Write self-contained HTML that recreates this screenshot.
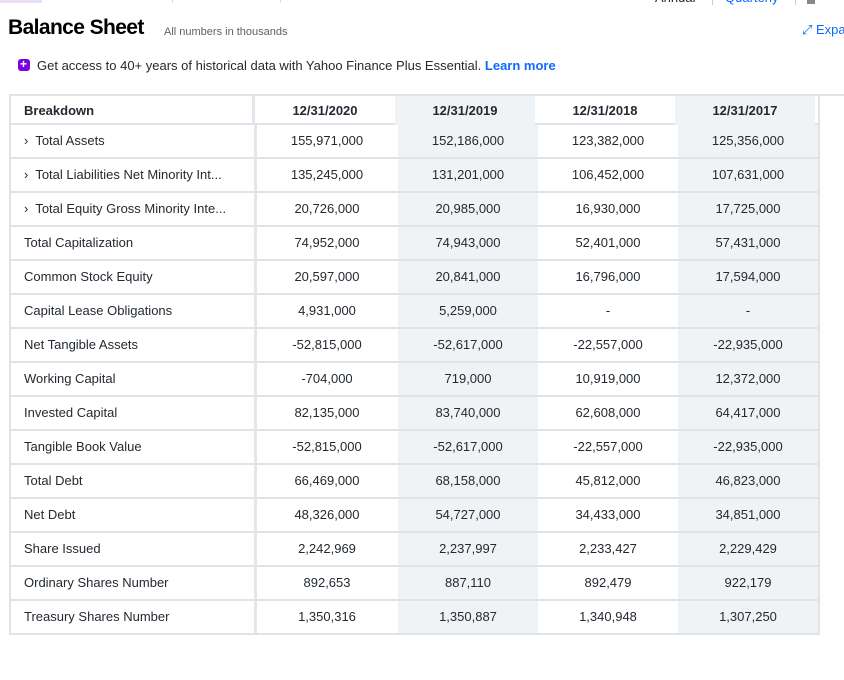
<!DOCTYPE html>
<html><head><meta charset="utf-8"><style>
*{margin:0;padding:0;box-sizing:border-box}
body{width:844px;height:680px;background:#fff;font-family:"Liberation Sans",sans-serif;color:#232a31;position:relative;overflow:hidden}
.a{position:absolute;white-space:nowrap}
.row{position:absolute;left:9px;width:811px;height:34px;border-bottom:2px solid #e0e4e9}
.c{position:absolute;top:0;height:32px;line-height:32px;font-size:13px;text-align:center;white-space:nowrap}
.l{left:0;width:248px;text-align:left;padding-left:15px;border-right:3px solid #e3e6ea}
.c1{left:248px;width:140px}
.c2{left:389px;width:140px;background:#f0f3f5}
.c3{left:529px;width:140px}
.c4{left:669px;width:140px;background:#f0f3f5}
.h .c{font-weight:bold;height:29px;line-height:29px}
</style></head><body>
<div class="a" style="left:0;top:0;width:42px;height:3px;background:#eadcf5"></div>
<div class="a" style="left:172px;top:0;width:1px;height:3px;background:#ddd"></div>
<div class="a" style="left:280px;top:0;width:1px;height:3px;background:#ddd"></div>
<div class="a" style="left:655px;top:-10px;font-size:13px;color:#232a31">Annual</div>
<div class="a" style="left:712px;top:0;width:1px;height:5px;background:#ccc"></div>
<div class="a" style="left:725px;top:-10px;font-size:13px;color:#0f69ff">Quarterly</div>
<div class="a" style="left:795px;top:0;width:1px;height:5px;background:#ccc"></div>
<div class="a" style="left:807px;top:0;width:8px;height:4px;background:#888"></div>
<div class="a" style="left:8px;top:16px;font-size:21px;font-weight:bold;letter-spacing:-0.6px;color:#000">Balance Sheet</div>
<div class="a" style="left:164px;top:26px;font-size:11px;color:#5b636a">All numbers in thousands</div>
<div class="a" style="left:802px;top:22px;font-size:13px;color:#0f69ff">⤢ Expa</div>
<div class="a" style="left:18px;top:59px;width:12px;height:12px;border-radius:3px;background:#7d00e0"></div>
<div class="a" style="left:20px;top:57px;color:#fff;font-size:12px;font-weight:bold">+</div>
<div class="a" style="left:37px;top:58px;font-size:13px">Get access to 40+ years of historical data with Yahoo Finance Plus Essential. <span style="color:#0f69ff;font-weight:bold">Learn more</span></div>
<div class="a" style="left:9px;top:94px;width:835px;height:2px;background:#e0e4e9"></div>
<div class="a" style="left:9px;top:94px;width:2px;height:541px;background:#e0e4e9"></div>
<div class="a" style="left:818px;top:94px;width:2px;height:541px;background:#e0e4e9"></div>
<div class="a" style="left:807px;top:162px;font-size:13px;font-weight:bold">Y</div>
<div class="row h" style="top:96px;height:29px;">
<div class="c l" style="left:2px;width:244px;padding-left:13px">Breakdown</div>
<div class="c c1" style="left:246px">12/31/2020</div><div class="c c2" style="left:386px">12/31/2019</div><div class="c c3" style="left:526px">12/31/2018</div><div class="c c4" style="left:666px">12/31/2017</div></div>
<div class="row" style="top:125px"><div class="c l">›&nbsp; Total Assets</div><div class="c c1">155,971,000</div><div class="c c2">152,186,000</div><div class="c c3">123,382,000</div><div class="c c4">125,356,000</div></div>
<div class="row" style="top:159px"><div class="c l">›&nbsp; Total Liabilities Net Minority Int...</div><div class="c c1">135,245,000</div><div class="c c2">131,201,000</div><div class="c c3">106,452,000</div><div class="c c4">107,631,000</div></div>
<div class="row" style="top:193px"><div class="c l">›&nbsp; Total Equity Gross Minority Inte...</div><div class="c c1">20,726,000</div><div class="c c2">20,985,000</div><div class="c c3">16,930,000</div><div class="c c4">17,725,000</div></div>
<div class="row" style="top:227px"><div class="c l">Total Capitalization</div><div class="c c1">74,952,000</div><div class="c c2">74,943,000</div><div class="c c3">52,401,000</div><div class="c c4">57,431,000</div></div>
<div class="row" style="top:261px"><div class="c l">Common Stock Equity</div><div class="c c1">20,597,000</div><div class="c c2">20,841,000</div><div class="c c3">16,796,000</div><div class="c c4">17,594,000</div></div>
<div class="row" style="top:295px"><div class="c l">Capital Lease Obligations</div><div class="c c1">4,931,000</div><div class="c c2">5,259,000</div><div class="c c3">-</div><div class="c c4">-</div></div>
<div class="row" style="top:329px"><div class="c l">Net Tangible Assets</div><div class="c c1">-52,815,000</div><div class="c c2">-52,617,000</div><div class="c c3">-22,557,000</div><div class="c c4">-22,935,000</div></div>
<div class="row" style="top:363px"><div class="c l">Working Capital</div><div class="c c1">-704,000</div><div class="c c2">719,000</div><div class="c c3">10,919,000</div><div class="c c4">12,372,000</div></div>
<div class="row" style="top:397px"><div class="c l">Invested Capital</div><div class="c c1">82,135,000</div><div class="c c2">83,740,000</div><div class="c c3">62,608,000</div><div class="c c4">64,417,000</div></div>
<div class="row" style="top:431px"><div class="c l">Tangible Book Value</div><div class="c c1">-52,815,000</div><div class="c c2">-52,617,000</div><div class="c c3">-22,557,000</div><div class="c c4">-22,935,000</div></div>
<div class="row" style="top:465px"><div class="c l">Total Debt</div><div class="c c1">66,469,000</div><div class="c c2">68,158,000</div><div class="c c3">45,812,000</div><div class="c c4">46,823,000</div></div>
<div class="row" style="top:499px"><div class="c l">Net Debt</div><div class="c c1">48,326,000</div><div class="c c2">54,727,000</div><div class="c c3">34,433,000</div><div class="c c4">34,851,000</div></div>
<div class="row" style="top:533px"><div class="c l">Share Issued</div><div class="c c1">2,242,969</div><div class="c c2">2,237,997</div><div class="c c3">2,233,427</div><div class="c c4">2,229,429</div></div>
<div class="row" style="top:567px"><div class="c l">Ordinary Shares Number</div><div class="c c1">892,653</div><div class="c c2">887,110</div><div class="c c3">892,479</div><div class="c c4">922,179</div></div>
<div class="row" style="top:601px"><div class="c l">Treasury Shares Number</div><div class="c c1">1,350,316</div><div class="c c2">1,350,887</div><div class="c c3">1,340,948</div><div class="c c4">1,307,250</div></div>
</body></html>
